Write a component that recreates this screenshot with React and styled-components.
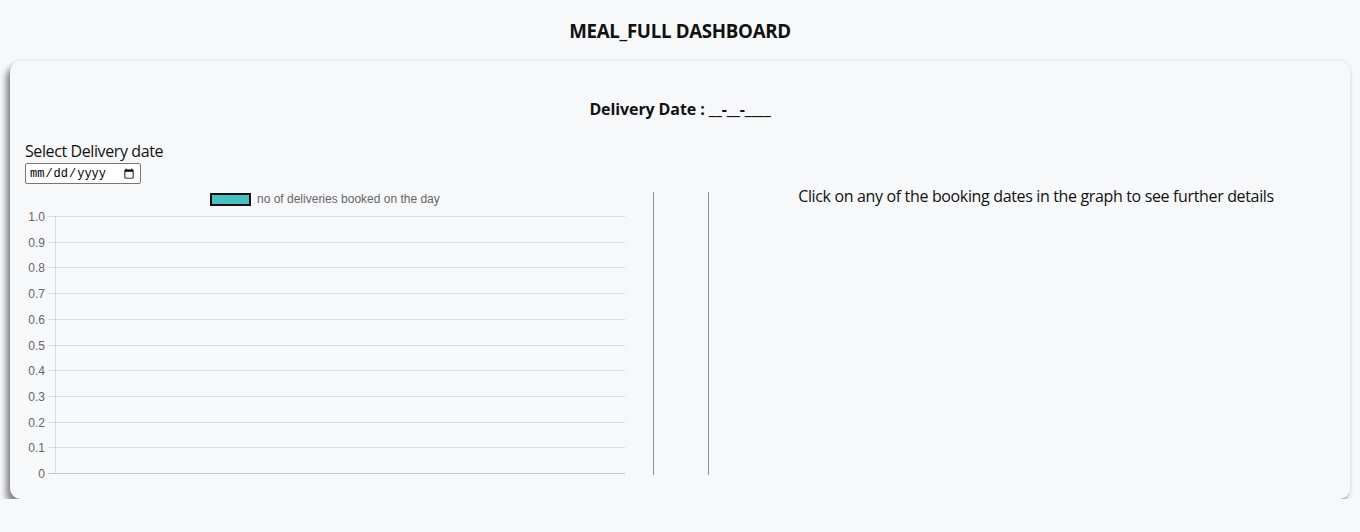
import React from 'react';
import styled, { createGlobalStyle } from 'styled-components';

const GlobalStyle = createGlobalStyle`
    body {
        margin: 0;
        background: #f7f8fa;
        font-family: "Open Sans", "Noto Sans", sans-serif;
        color: #111;
    }
`;

const Header = styled.div`
    height: 61px;
    display: flex;
    align-items: center;
    justify-content: center;
    font-size: 18.7px;
    font-weight: 700;
    letter-spacing: -0.3px;
`;

const Card = styled.div`
    margin: 0 10px;
    height: 438px;
    box-sizing: border-box;
    padding: 37px 15px 0 15px;
    background: #f7f8fa;
    border-radius: 11px;
    box-shadow: -4px 6px 6px rgba(0, 0, 0, 0.45), 0 0 5px rgba(0, 0, 0, 0.1);
`;

const DateHeading = styled.div`
    text-align: center;
    font-size: 16px;
    font-weight: 700;
    line-height: 22px;
    letter-spacing: -0.1px;
`;

const Label = styled.div`
    margin-top: 20px;
    font-size: 16px;
    line-height: 22px;
    letter-spacing: -0.4px;
`;

const DateInput = styled.input`
    display: block;
    box-sizing: border-box;
    width: 116px;
    height: 21px;
    margin-top: 1px;
    padding: 0 3px;
    font-family: "Liberation Mono", monospace;
    font-size: 12px;
    border: 1px solid #767676;
    border-radius: 2px;
    background: #fff;
`;

const Row = styled.div`
    display: flex;
    margin-top: 2px;
`;

const ChartBox = styled.div`
    width: 605px;
    flex: none;
`;

const Divider = styled.div`
    flex: none;
    width: 54px;
    height: 283px;
    margin: 6px 0 0 23px;
    border-left: 1px solid #8f8f8f;
    border-right: 1px solid #8f8f8f;
`;

const Details = styled.div`
    flex: 1;
    margin-top: -1px;
    padding-left: 28px;
    text-align: center;
    font-size: 16px;
    line-height: 22px;
    letter-spacing: -0.35px;
`;

const ticks = ['1.0', '0.9', '0.8', '0.7', '0.6', '0.5', '0.4', '0.3', '0.2', '0.1', '0'];

function Chart() {
    return (
        <svg width="605" height="294" viewBox="0 0 605 294">
            <rect x="186" y="8" width="39" height="11" fill="#4bc0c0" stroke="#111" strokeWidth="2" />
            <text x="232" y="17" fontFamily="Liberation Sans, Arial, sans-serif" fontSize="12" fill="#666">
                no of deliveries booked on the day
            </text>
            {ticks.map((t, i) => {
                const y = Math.round(30 + i * 25.7) + 0.5;
                return (
                    <g key={t}>
                        <line x1="23" x2="600" y1={y} y2={y}
                            stroke={i === 10 ? 'rgba(0,0,0,0.2)' : 'rgba(0,0,0,0.1)'} />
                        <text x="20" y={y + 4} textAnchor="end" fontFamily="Liberation Sans, Arial, sans-serif"
                            fontSize="12" fill="#666">{t}</text>
                    </g>
                );
            })}
            <line x1="30.5" x2="30.5" y1="30" y2="287" stroke="rgba(0,0,0,0.1)" />
        </svg>
    );
}

export default function App() {
    return (
        <>
            <GlobalStyle />
            <Header>MEAL_FULL DASHBOARD</Header>
            <Card>
                <DateHeading>Delivery Date : __-__-____</DateHeading>
                <Label>Select Delivery date</Label>
                <DateInput type="date" />
                <Row>
                    <ChartBox>
                        <Chart />
                    </ChartBox>
                    <Divider />
                    <Details>Click on any of the booking dates in the graph to see further details</Details>
                </Row>
            </Card>
        </>
    );
}
